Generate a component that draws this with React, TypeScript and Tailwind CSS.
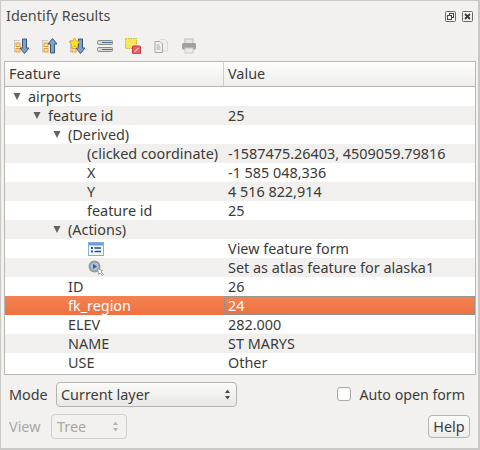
import React from 'react';

const rows = [
  { label: 'airports', value: '', indent: 28, arrow: 13 },
  { label: 'feature id', value: '25', indent: 48, arrow: 33 },
  { label: '(Derived)', value: '', indent: 68, arrow: 53 },
  { label: '(clicked coordinate)', value: '-1587475.26403, 4509059.79816', indent: 87 },
  { label: 'X', value: '-1 585 048,336', indent: 87 },
  { label: 'Y', value: '4 516 822,914', indent: 87 },
  { label: 'feature id', value: '25', indent: 87 },
  { label: '(Actions)', value: '', indent: 68, arrow: 53 },
  { icon: 'form', value: 'View feature form', indent: 88 },
  { icon: 'atlas', value: 'Set as atlas feature for alaska1', indent: 88 },
  { label: 'ID', value: '26', indent: 68 },
  { label: 'fk_region', value: '24', indent: 68, selected: true },
  { label: 'ELEV', value: '282.000', indent: 68 },
  { label: 'NAME', value: 'ST MARYS', indent: 68 },
  { label: 'USE', value: 'Other', indent: 68 },
];

function Arrow({ left }: { left: number }) {
  return (
    <svg width="8" height="9" viewBox="0 0 8 9" className="absolute top-[5px]" style={{ left }}>
      <path d="M0.500 1h7L4 8z" fill="#62625e" />
    </svg>
  );
}

function ExpandIcon({ up, star }: { up?: boolean; star?: boolean }) {
  return (
    <svg width="16" height="16" viewBox="0 0 16 16">
      <path d="M1.500 2.500v11M1.500 2.500h5M1.500 13.500h5" stroke="#a4a4a0" strokeDasharray="1 1" fill="none" />
      <rect x="3" y="5" width="4" height="3.500" fill="#fbe2b0" stroke="#ef9a2e" />
      <rect x="3" y="10.500" width="4" height="3.500" fill="#fbe2b0" stroke="#ef9a2e" />
      <path
        d={up ? 'M11.500 0.500l4.500 5.500h-2.500v9h-4v-9H7z' : 'M9.500 1h4v9H16l-4.500 5.500L7 10h2.500z'}
        fill="#7fa3c7"
        stroke="#35587f"
        strokeWidth="1"
      />
      {star && (
        <path d="M5.500 -0.500l1.800 3.500 3.900.5-2.800 2.700.7 3.900-3.600-1.900-3.500 1.900.7-3.900L0 3.500l3.900-.5z" fill="#fbe81e" stroke="#e8902a" strokeWidth=".8" />
      )}
    </svg>
  );
}

function Toolbar() {
  return (
    <div className="flex items-center h-[30px] pl-[12px] gap-[12px]">
      <ExpandIcon />
      <ExpandIcon up />
      <ExpandIcon star />
      <svg width="16" height="16" viewBox="0 0 16 16">
        <rect x="0.500" y="2.500" width="15" height="4" rx="1" fill="#d6d6d2" stroke="#8c8c88" />
        <rect x="0.500" y="9.500" width="15" height="4" rx="1" fill="#d6d6d2" stroke="#8c8c88" />
        <path d="M5 4.500h10M5 11.500h10" stroke="#44709c" />
      </svg>
      <svg width="16" height="16" viewBox="0 0 16 16">
        <rect x="0.500" y="0.500" width="11" height="10" fill="#f6e65a" stroke="#c9b53a" strokeDasharray="1.500 1" />
        <rect x="7.500" y="8" width="8" height="8" rx="1" fill="#ea5f62" stroke="#c83a3c" />
        <path d="M9.500 14l4-4" stroke="#fff" />
      </svg>
      <svg width="16" height="16" viewBox="0 0 16 16">
        <path d="M7 1.500h5l2.500 2.500v9H10" fill="#f0efed" stroke="#d6d6d2" />
        <path d="M2 3.500h5l2.500 2.500v8.500H2z" fill="#f4f3f1" stroke="#a8a8a4" />
        <path d="M3.500 7h3M3.500 9h4M3.500 11h4" stroke="#a8a8a4" />
      </svg>
      <svg width="16" height="16" viewBox="0 0 16 16">
        <rect x="4" y="1" width="8" height="5" fill="#e6e6e4" stroke="#bcbcb8" />
        <rect x="1" y="5" width="14" height="6.500" rx="1.500" fill="#a0a09e" />
        <rect x="4" y="10" width="8" height="5" fill="#ececea" stroke="#c8c8c4" />
      </svg>
    </div>
  );
}

function FormIcon() {
  return (
    <svg width="16" height="16" viewBox="0 0 16 16">
      <rect x="0.500" y="1.500" width="15" height="13" fill="#f4f8fd" stroke="#86aedd" />
      <rect x="1" y="2" width="14" height="2.500" fill="#6a9edc" />
      <path d="M3 7h2M3 10.500h2" stroke="#1f5fb0" strokeWidth="2" />
      <path d="M6.500 7h6.500M6.500 10.500h6.500" stroke="#1f4f90" strokeWidth="1.500" />
    </svg>
  );
}

function AtlasIcon() {
  return (
    <svg width="16" height="16" viewBox="0 0 16 16">
      <circle cx="6.500" cy="6.500" r="5" fill="#a9c3de" stroke="#9a9a98" strokeWidth="2" />
      <path d="M5 4l4 2.500L5 9z" fill="#2f5f9a" />
      <path d="M9.500 8.500l1 6 1.500-1.500 2.500 2.500 1-1-2.500-2.500 1.500-1.500z" fill="#f4f4f2" stroke="#8e8e8c" strokeWidth=".8" />
    </svg>
  );
}

function Spinner({ disabled }: { disabled?: boolean }) {
  const color = disabled ? '#b4b4b0' : '#4a4a46';
  return (
    <svg width="7" height="13" viewBox="0 0 7 13">
      <path d="M3.500 1.500L6 5H1z" fill={color} />
      <path d="M3.500 11.500L6 8H1z" fill={color} />
    </svg>
  );
}

export default function App() {
  return (
    <div
      className="w-[480px] h-[450px] bg-[#f2f1f0] text-[#3c3b37] text-[14.4px] border-t border-l border-r-2 border-b-2 border-[#c9c8c5] flex flex-col overflow-hidden"
      style={{ fontFamily: '"Noto Sans", sans-serif' }}
    >
      <div className="flex items-center justify-between h-[30px] pl-[5px] pr-[5px] shrink-0">
        <span className="text-[#4a4945]">Identify Results</span>
        <div className="flex gap-[6px]">
          <svg width="11" height="11" viewBox="0 0 11 11">
            <rect x="0.500" y="0.500" width="10" height="10" rx="1" fill="none" stroke="#6a6a66" />
            <rect x="4.500" y="2.500" width="4" height="4" fill="none" stroke="#4a4a46" />
            <rect x="2.500" y="4.500" width="4" height="4" fill="#f2f1f0" stroke="#4a4a46" />
          </svg>
          <svg width="11" height="11" viewBox="0 0 11 11">
            <rect x="0.500" y="0.500" width="10" height="10" rx="1" fill="none" stroke="#6a6a66" />
            <path d="M3 3l5 5M8 3l-5 5" stroke="#3c3b37" strokeWidth="1.800" />
          </svg>
        </div>
      </div>
      <Toolbar />
      <div className="ml-[3px] mr-[2px] h-[314px] border border-[#b9b8b4] bg-white flex flex-col shrink-0">
        <div className="flex h-[25px] shrink-0 border-b border-[#b4b3af] bg-gradient-to-b from-[#fdfdfc] to-[#efeeec] items-center">
          <div className="w-[219px] h-full border-r border-[#cfcecb] pl-[4px] flex items-center">Feature</div>
          <div className="pl-[4px]">Value</div>
        </div>
        {rows.map((row, i) => (
          <div
            key={i}
            className={`flex h-[19px] items-center relative shrink-0 ${
              row.selected
                ? 'bg-gradient-to-b from-[#f58252] to-[#ee7040] text-white'
                : i % 2 === 1
                  ? 'bg-[#f1f0ee]'
                  : 'bg-white'
            }`}
          >
            {row.arrow && <Arrow left={row.arrow - 5} />}
            <div className="w-[219px] shrink-0 whitespace-nowrap" style={{ paddingLeft: row.indent - 5 }}>
              {row.icon === 'form' && <FormIcon />}
              {row.icon === 'atlas' && <AtlasIcon />}
              {row.label}
            </div>
            <div
              className={`flex-1 h-full flex items-center pl-[3px] whitespace-nowrap border border-dotted ${
                row.selected ? 'border-[#8f8f8a]' : 'border-transparent'
              }`}
            >
              {row.value}
            </div>
          </div>
        ))}
      </div>
      <div className="flex items-center h-[25px] mt-[7px] pl-[8px] pr-[13px] shrink-0">
        <span className="w-[47px]">Mode</span>
        <div className="w-[181px] h-[25px] rounded-[4px] border border-[#b5b4b0] bg-gradient-to-b from-[#fbfbfa] to-[#e9e8e6] flex items-center justify-between pl-[4px] pr-[5px]">
          <span>Current layer</span>
          <Spinner />
        </div>
        <div className="ml-auto flex items-center gap-[8px]">
          <div className="w-[14px] h-[14px] rounded-[3px] border border-[#a9a8a4] bg-white" />
          <span className="text-[14.2px]">Auto open form</span>
        </div>
      </div>
      <div className="flex items-center h-[25px] mt-[7px] pl-[8px] pr-[8px] shrink-0">
        <span className="w-[42px] text-[#a9a8a4]">View</span>
        <div className="w-[76px] h-[25px] rounded-[4px] border border-[#d0cfcc] flex items-center justify-between pl-[5px] pr-[7px] text-[#a9a8a4]">
          <span>Tree</span>
          <Spinner disabled />
        </div>
        <div className="ml-auto w-[42px] h-[23px] rounded-[4px] border border-[#b5b4b0] bg-gradient-to-b from-[#fbfbfa] to-[#eeedeb] flex items-center justify-center">
          Help
        </div>
      </div>
    </div>
  );
}
